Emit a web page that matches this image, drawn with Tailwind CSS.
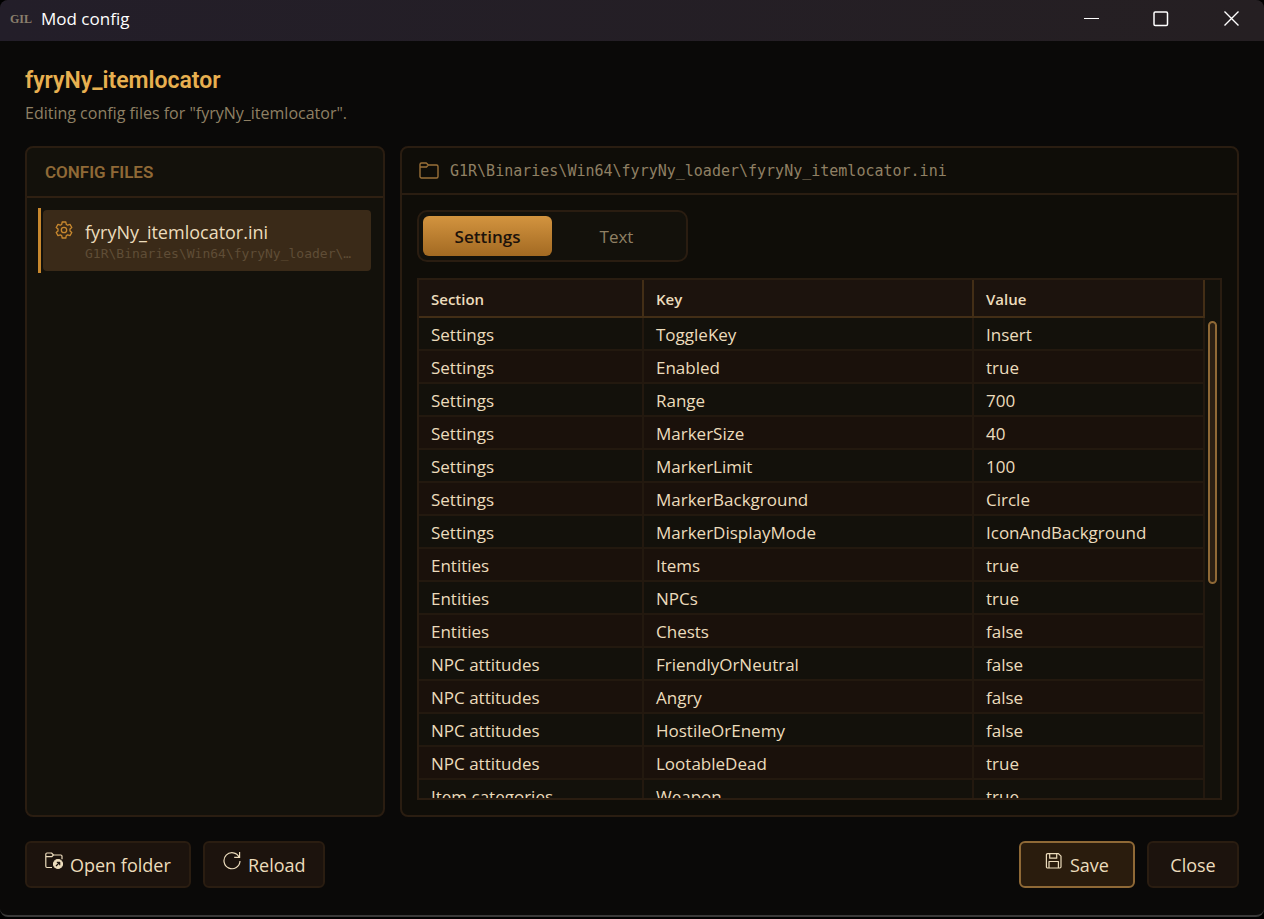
<!DOCTYPE html>
<html lang="en">
<head>
    <meta charset="UTF-8">
    <meta name="viewport" content="width=device-width, initial-scale=1.0">
    <title>Mod config</title>
    <script src="https://cdn.jsdelivr.net/npm/@tailwindcss/browser@4"></script>
</head>
<body class="h-screen overflow-hidden bg-black pb-[2px] font-['Open_Sans','Noto_Sans',sans-serif] text-[17px] leading-6 text-[#ecdcbc]">
    <div class="flex h-full flex-col overflow-hidden rounded-lg border-b-2 border-[#3a3938] bg-[#0a0908]">
        <!-- Title bar -->
        <header class="flex h-[41px] shrink-0 items-center bg-linear-to-r from-[#231e29] to-[#251f22] pb-1 pl-[10px]">
            <span class="w-[31px] font-['Liberation_Serif',serif] text-[12px] font-bold text-[#8a7f6c]" aria-hidden="true">GIL</span>
            <span class="text-[17px] text-white">Mod config</span>
            <div class="ml-auto flex gap-1">
                <button type="button" aria-label="Minimize" class="flex h-9 w-[66px] items-center justify-center">
                    <svg class="h-4 w-4" viewBox="0 0 16 16" fill="none" stroke="#fff"><path d="M1 7.500h15" /></svg>
                </button>
                <button type="button" aria-label="Maximize" class="flex h-9 w-[66px] items-center justify-center">
                    <svg class="h-4 w-4" viewBox="0 0 16 16" fill="none" stroke="#fff" stroke-width="1.500"><rect x="1" y="1" width="13.500" height="13.500" rx="1.200" /></svg>
                </button>
                <button type="button" aria-label="Close window" class="flex h-9 w-[66px] items-center justify-center">
                    <svg class="h-4 w-4" viewBox="0 0 16 16" fill="none" stroke="#fff" stroke-width="1.400"><path d="M1.500 .5l14 14M15.500 .5l-14 14" /></svg>
                </button>
            </div>
        </header>

        <main class="flex min-h-0 flex-1 flex-col px-[25px] pt-6 pb-[27px]">
            <h1 class="font-[Roboto,sans-serif] text-[23px] leading-8 font-semibold text-[#e8b050]">fyryNy_itemlocator</h1>
            <p class="pt-1 text-[16px] text-[#8f8064]">Editing config files for "fyryNy_itemlocator".</p>

            <div class="mt-[21px] flex min-h-0 flex-1 gap-[15px]">
                <!-- File list -->
                <section class="w-[360px] shrink-0 rounded-lg border-2 border-[#2a1d11] bg-[#13110b]">
                    <h2 class="flex h-[50px] items-center border-b-2 border-[#2f2012] px-[18px] font-[Roboto,sans-serif] text-[17px] font-semibold text-[#8f6936]">CONFIG FILES</h2>
                    <div class="py-[10px] pr-3 pl-[11px]">
                        <a href="#" class="flex border-l-3 border-[#c8882e] py-[2px] pl-[2px]">
                            <span class="flex h-[61px] min-w-0 flex-1 gap-3 rounded bg-[#3a2a18] pt-[10px] pr-[14px] pl-3">
                                <svg class="mt-[1px] h-[18px] w-[18px] shrink-0" viewBox="0 0 18 18" fill="none" stroke="#c8882e" stroke-width="1.3" stroke-linejoin="round">
                                    <path d="M7.2 1h3.6l.5 2.4 1.4.8 2.3-.8 1.8 3.1-1.8 1.6v1.8l1.8 1.6-1.8 3.1-2.3-.8-1.4.8-.5 2.4H7.200l-.5-2.4-1.400-.8-2.300.8-1.800-3.100 1.800-1.600V8.100L1.200 6.500 3 3.400l2.300.8 1.400-.8z" />
                                    <circle cx="9" cy="9" r="2.700" />
                                </svg>
                                <span class="min-w-0 flex-1">
                                    <span class="block text-[18px]">fyryNy_itemlocator.ini</span>
                                    <span class="block truncate font-['DejaVu_Sans_Mono',monospace] text-[13px] leading-5 text-[#5f4d36]">G1R\Binaries\Win64\fyryNy_loader\fyryNy_itemlocator.ini</span>
                                </span>
                            </span>
                        </a>
                    </div>
                </section>

                <!-- Editor -->
                <section class="flex min-w-0 flex-1 flex-col rounded-lg border-2 border-[#2a1d11] bg-[#0f0d08]">
                    <div class="flex h-[47px] shrink-0 items-center gap-[11px] border-b-2 border-[#2a1d11] px-[17px]">
                        <svg class="h-5 w-5" viewBox="0 0 20 20" fill="none" stroke="#9a7038" stroke-width="1.4" stroke-linejoin="round">
                            <path d="M1 15.500v-12A1.500 1.500 0 0 1 2.500 2h4.800L9.300 4h8.200A1.500 1.500 0 0 1 19 5.500v10a1.500 1.500 0 0 1-1.500 1.500h-15A1.500 1.500 0 0 1 1 15.500zM1 6h6.500l1.800-2" />
                        </svg>
                        <span class="font-['DejaVu_Sans_Mono',monospace] text-[15px] text-[#8f8064]">G1R\Binaries\Win64\fyryNy_loader\fyryNy_itemlocator.ini</span>
                    </div>

                    <div class="flex min-h-0 flex-1 flex-col gap-4 p-[15px]">
                        <div role="tablist" class="flex h-[52px] w-[271px] shrink-0 rounded-[10px] border-2 border-[#2a1d11] bg-[#13110b] p-1">
                            <button type="button" role="tab" aria-selected="true" class="w-[129px] rounded-md bg-linear-to-b from-[#d3943f] to-[#a36a22] pt-[2px] font-semibold text-[#1c120a]">Settings</button>
                            <button type="button" role="tab" aria-selected="false" class="w-[129px] pt-[2px] text-[#8f8064]">Text</button>
                        </div>

                        <div class="flex min-h-0 flex-1 border-2 border-[#2a1d11] bg-[#13110b]">
                            <div class="min-w-0 flex-1 overflow-y-auto [scrollbar-width:none]">
                                <table class="w-full table-fixed border-separate border-spacing-0 text-left [&_td]:h-[33px] [&_td]:border-r-2 [&_td]:border-b-2 [&_td]:border-[#23190f] [&_td]:px-3 [&_td]:pt-[2px] [&_td]:pb-0 [&_th]:h-[38px] [&_th]:border-r-2 [&_th]:border-b-2 [&_th]:border-[#432e16] [&_th]:bg-[#1c130d] [&_th]:px-3 [&_th]:pt-[2px] [&_th]:pb-0 [&_th]:font-semibold">
                                    <thead class="sticky top-0 text-[15px]">
                                        <tr>
                                            <th class="w-[225px]">Section</th>
                                            <th class="w-[330px]">Key</th>
                                            <th>Value</th>
                                        </tr>
                                    </thead>
                                    <tbody class="[&>tr:nth-child(even)]:bg-[#1a110b]">
                                        <tr><td>Settings</td><td>ToggleKey</td><td>Insert</td></tr>
                                        <tr><td>Settings</td><td>Enabled</td><td>true</td></tr>
                                        <tr><td>Settings</td><td>Range</td><td>700</td></tr>
                                        <tr><td>Settings</td><td>MarkerSize</td><td>40</td></tr>
                                        <tr><td>Settings</td><td>MarkerLimit</td><td>100</td></tr>
                                        <tr><td>Settings</td><td>MarkerBackground</td><td>Circle</td></tr>
                                        <tr><td>Settings</td><td>MarkerDisplayMode</td><td>IconAndBackground</td></tr>
                                        <tr><td>Entities</td><td>Items</td><td>true</td></tr>
                                        <tr><td>Entities</td><td>NPCs</td><td>true</td></tr>
                                        <tr><td>Entities</td><td>Chests</td><td>false</td></tr>
                                        <tr><td>NPC attitudes</td><td>FriendlyOrNeutral</td><td>false</td></tr>
                                        <tr><td>NPC attitudes</td><td>Angry</td><td>false</td></tr>
                                        <tr><td>NPC attitudes</td><td>HostileOrEnemy</td><td>false</td></tr>
                                        <tr><td>NPC attitudes</td><td>LootableDead</td><td>true</td></tr>
                                        <tr><td>Item categories</td><td>Weapon</td><td>true</td></tr>
                                    </tbody>
                                </table>
                            </div>
                            <!-- Scrollbar -->
                            <div class="w-[15px] shrink-0 px-[3px] pt-[41px]">
                                <div class="h-[263px] rounded-full border-2 border-[#8f6936] bg-[#2a1f13]"></div>
                            </div>
                        </div>
                    </div>
                </section>
            </div>

            <!-- Actions -->
            <footer class="mt-6 flex h-[47px] shrink-0 gap-3 text-[18px]">
                <button type="button" class="flex w-[166px] items-center gap-[7px] rounded-md border-2 border-[#2a1d11] bg-[#1c130d] pl-[18px] whitespace-nowrap">
                    <svg class="mb-2 h-[18px] w-[18px] shrink-0" viewBox="0 0 18 18" fill="none" stroke="currentColor" stroke-width="1.2" stroke-linejoin="round">
                        <path d="M7 15.500H2A1.200 1.200 0 0 1 .8 14.300V2.200A1.200 1.200 0 0 1 2 1h4.500l2 2h7.300A1.200 1.200 0 0 1 17 4.200v3M.8 4.700h5.900L8.500 3" />
                        <circle cx="13" cy="12" r="4.500" fill="currentColor" />
                        <path stroke="#1c130d" d="M11 14l3.500-3.500M11.800 10.300h2.900v2.900" />
                    </svg>
                    Open folder
                </button>
                <button type="button" class="flex w-[122px] items-center gap-[7px] rounded-md border-2 border-[#2a1d11] bg-[#1c130d] pl-[18px]">
                    <svg class="mb-2 h-[18px] w-[18px] shrink-0" viewBox="0 0 18 18" fill="none" stroke="currentColor" stroke-width="1.2">
                        <path d="M16.200 5.200A8 8 0 1 0 17 9M16.600 0v5.400h-5.400" />
                    </svg>
                    Reload
                </button>
                <button type="button" class="ml-auto flex w-[116px] items-center gap-[7px] rounded-md border-2 border-[#8f6936] bg-[#2a1c0d] pl-6">
                    <svg class="mb-2 h-[18px] w-[18px] shrink-0" viewBox="0 0 18 18" fill="none" stroke="currentColor" stroke-width="1.2" stroke-linejoin="round">
                        <path d="M2.600 1.600h10.800l2.600 2.600v10.600a1.200 1.200 0 0 1-1.200 1.200H2.600a1.200 1.200 0 0 1-1.200-1.200V2.800a1.200 1.200 0 0 1 1.200-1.200zM4.700 1.600v4.600h7V1.600M4 16V9.500h9.400V16" />
                    </svg>
                    Save
                </button>
                <button type="button" class="w-[92px] rounded-md border-2 border-[#2a1d11] bg-[#1c130d]">Close</button>
            </footer>
        </main>
    </div>
</body>
</html>
